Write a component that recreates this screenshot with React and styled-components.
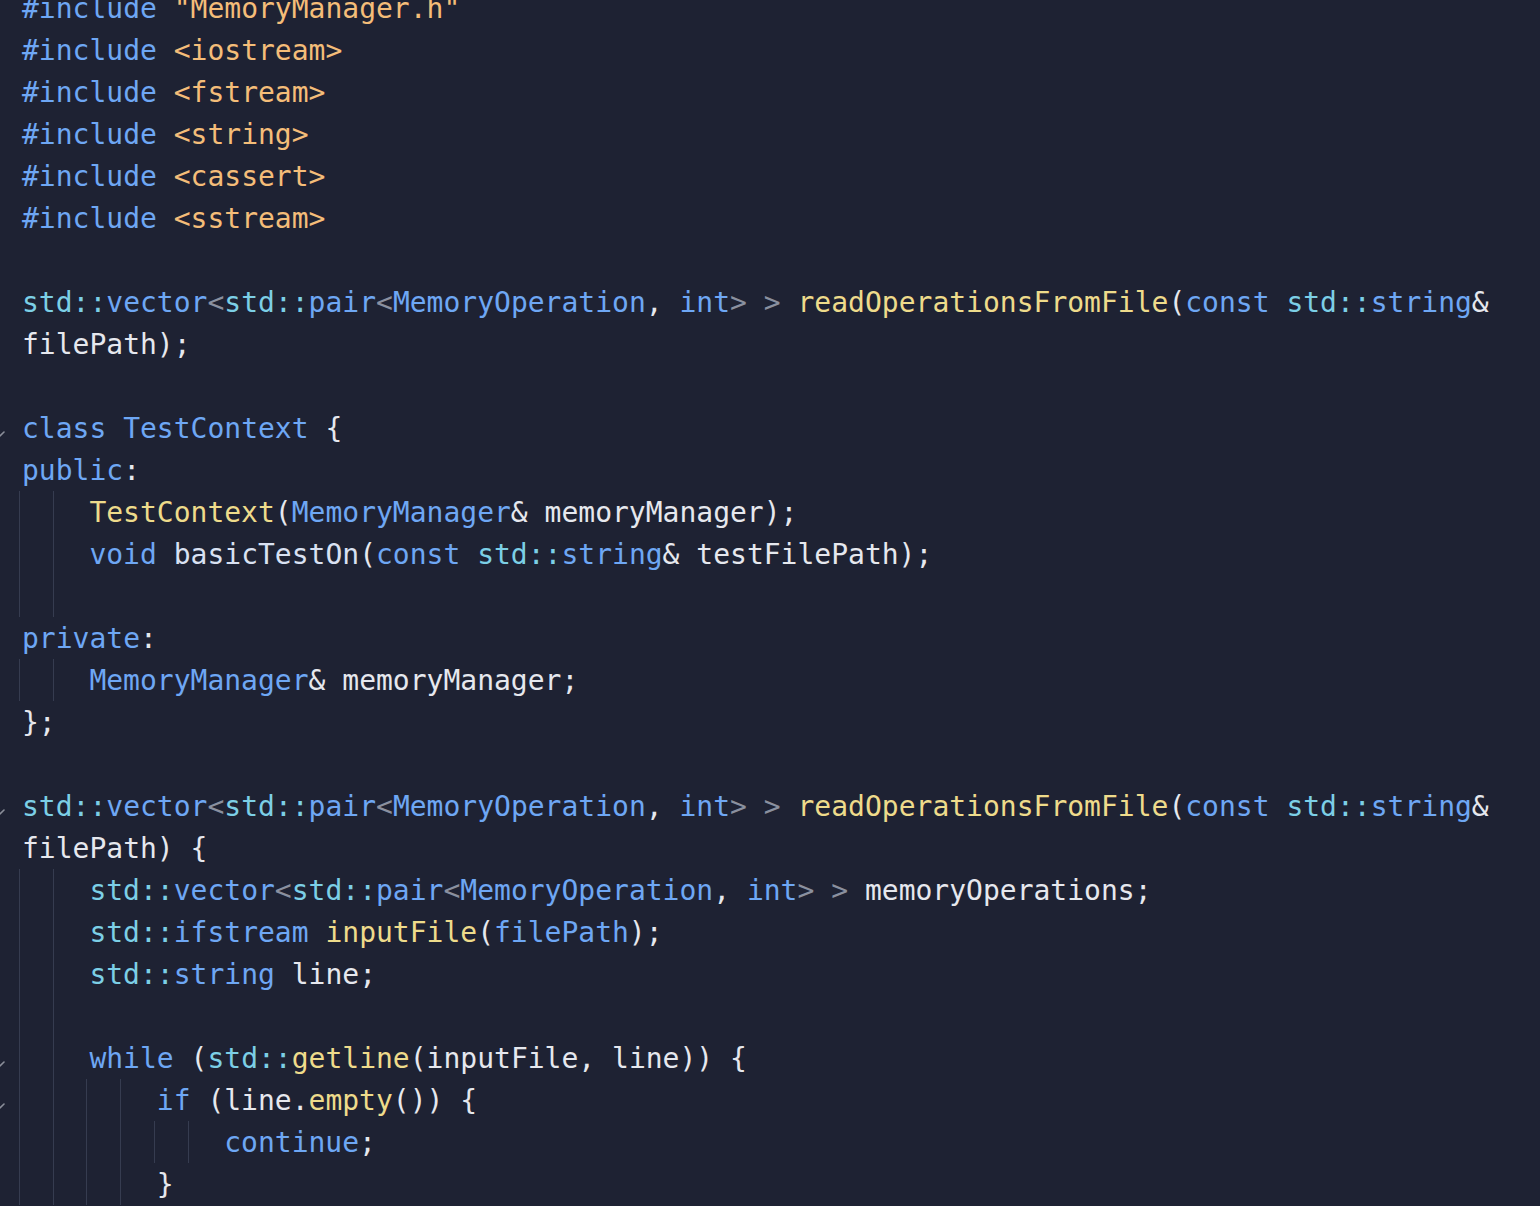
import styled, { createGlobalStyle } from "styled-components";

const palette = {
  kw: "#6ea7f4",
  str: "#f4bd79",
  ns: "#7ccfe6",
  fn: "#eedb8b",
  op: "#8a909f",
  pl: "#e6e8ee",
  id: "#d9e1f2",
};

const K = (t) => ["kw", t];
const S = (t) => ["str", t];
const N = (t) => ["ns", t];
const F = (t) => ["fn", t];
const O = (t) => ["op", t];
const P = (t) => ["pl", t];
const I = (t) => ["id", t];

const vectorPair = [
  N("std::"), K("vector"), O("<"), N("std::"), K("pair"), O("<"),
  K("MemoryOperation"), P(", "), K("int"), O(">"), P(" "), O(">"), P(" "),
];

const lines = [
  { tokens: [K("#include"), P(" "), S('"MemoryManager.h"')] },
  { tokens: [K("#include"), P(" "), S("<iostream>")] },
  { tokens: [K("#include"), P(" "), S("<fstream>")] },
  { tokens: [K("#include"), P(" "), S("<string>")] },
  { tokens: [K("#include"), P(" "), S("<cassert>")] },
  { tokens: [K("#include"), P(" "), S("<sstream>")] },
  { tokens: [] },
  {
    tokens: [
      ...vectorPair, F("readOperationsFromFile"), P("("), K("const"), P(" "),
      N("std::"), K("string"), P("&"),
    ],
  },
  { tokens: [P("filePath);")] },
  { tokens: [] },
  { fold: true, tokens: [K("class"), P(" "), K("TestContext"), P(" {")] },
  { tokens: [K("public"), P(":")] },
  {
    guides: 2,
    tokens: [F("TestContext"), P("("), K("MemoryManager"), P("& memoryManager);")],
  },
  {
    guides: 2,
    tokens: [
      K("void"), P(" "), I("basicTestOn"), P("("), K("const"), P(" "),
      N("std::"), K("string"), P("& testFilePath);"),
    ],
  },
  { guides: 2, tokens: [] },
  { tokens: [K("private"), P(":")] },
  { guides: 2, tokens: [K("MemoryManager"), P("& memoryManager;")] },
  { tokens: [P("};")] },
  { tokens: [] },
  {
    fold: true,
    tokens: [
      ...vectorPair, F("readOperationsFromFile"), P("("), K("const"), P(" "),
      N("std::"), K("string"), P("&"),
    ],
  },
  { tokens: [P("filePath) {")] },
  { guides: 2, tokens: [...vectorPair, P("memoryOperations;")] },
  {
    guides: 2,
    tokens: [N("std::"), K("ifstream"), P(" "), F("inputFile"), P("("), K("filePath"), P(");")],
  },
  { guides: 2, tokens: [N("std::"), K("string"), P(" line;")] },
  { guides: 2, tokens: [] },
  {
    guides: 2,
    fold: true,
    tokens: [K("while"), P(" ("), N("std::"), F("getline"), P("(inputFile, line)) {")],
  },
  {
    guides: 4,
    fold: true,
    tokens: [K("if"), P(" (line."), F("empty"), P("()) {")],
  },
  { guides: 6, tokens: [K("continue"), P(";")] },
  { guides: 4, tokens: [P("}")] },
];

const GlobalStyle = createGlobalStyle`
  body {
    margin: 0;
    background: #1e2233;
  }
`;

const Editor = styled.div`
  height: 100vh;
  overflow: hidden;
  background: #1e2233;
  font-family: "DejaVu Sans Mono", "Liberation Mono", monospace;
  font-size: 28px;
`;

const Lines = styled.div`
  margin-top: -13px;
`;

const Row = styled.div`
  position: relative;
  display: flex;
  align-items: center;
  height: 42px;
  padding-left: 19px;
  white-space: pre;
`;

const Guide = styled.span`
  flex: none;
  align-self: stretch;
  box-sizing: border-box;
  width: 2ch;
  border-left: 1px solid #363c50;
`;

const Code = styled.span`
  margin-left: 3px;
`;

const Token = styled.span`
  color: ${(p) => palette[p.$kind]};
`;

const Fold = styled.svg`
  position: absolute;
  left: -7px;
  top: 20px;
  width: 14px;
  height: 14px;
`;

const FoldIcon = () => (
  <Fold viewBox="0 0 14 14">
    <path
      d="M3 5 L7 9 L11 5"
      fill="none"
      stroke="#8a8e99"
      strokeWidth="1.6"
      strokeLinecap="round"
      strokeLinejoin="round"
    />
  </Fold>
);

const App = () => {
  return (
    <Editor>
      <GlobalStyle />
      <Lines>
        {lines.map((line, i) => (
          <Row key={i}>
            {line.fold && <FoldIcon />}
            {Array.from({ length: line.guides || 0 }).map((_, g) => (
              <Guide key={g} />
            ))}
            <Code>
              {line.tokens.map(([kind, text], j) => (
                <Token key={j} $kind={kind}>
                  {text}
                </Token>
              ))}
            </Code>
          </Row>
        ))}
      </Lines>
    </Editor>
  );
};

export default App;
